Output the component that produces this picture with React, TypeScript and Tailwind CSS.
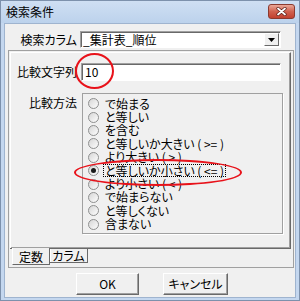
import React from "react";

const items = [
  "で始まる",
  "と等しい",
  "を含む",
  "と等しいか大きい ( >= )",
  "より大きい ( > )",
  "と等しいか小さい ( <= )",
  "より小さい ( < )",
  "で始まらない",
  "と等しくない",
  "含まない",
];

function Radio({ checked }: { checked?: boolean }) {
  return (
    <div className="w-[11px] h-[11px] rounded-full border border-[#8e8f8f] bg-gradient-to-br from-[#d6d6d6] to-[#fdfdfd] flex items-center justify-center shrink-0">
      {checked && <div className="w-[5px] h-[5px] rounded-full bg-[#1a1a1a]" />}
    </div>
  );
}

export default function App() {
  return (
    <div className="relative w-[300px] h-[301px] overflow-hidden bg-[#c4d7ef] border border-[#7d91ac] flex flex-col text-[12px] leading-none text-black [font-family:'Noto_Sans_CJK_JP',sans-serif] [font-feature-settings:'palt']">
      {/* title bar */}
      <div className="h-[22px] flex items-center justify-between pl-[5px] pr-[4px] bg-gradient-to-b from-[#cfdff3] to-[#bcd2ec]">
        <span className="text-[12px] text-black">検索条件</span>
        <div className="w-[27px] h-[15px] mt-[-2px] rounded-[3px] border border-[#8b3a2f] bg-gradient-to-b from-[#e9a899] via-[#d0614f] to-[#c2402f] flex items-center justify-center">
          <svg width="11" height="9" viewBox="0 0 11 9">
            <path d="M2 1.5 L9 7.5 M9 1.5 L2 7.5" stroke="#5a1d16" strokeWidth="3.2" strokeLinecap="round" />
            <path d="M2 1.5 L9 7.5 M9 1.5 L2 7.5" stroke="#ffffff" strokeWidth="1.8" strokeLinecap="round" />
          </svg>
        </div>
      </div>

      {/* client area */}
      <div className="flex-1 mx-[3px] mb-[2px] bg-[#f0f0f0] border border-[#9fb4cf] flex flex-col">
        {/* combobox row */}
        <div className="flex items-center mt-[7px] h-[17px]">
          <div className="w-[72px] text-right">検索カラム</div>
          <div className="ml-[3px] w-[201px] h-[17px] bg-white border-t border-l border-[#a0a0a0] border-r border-b border-r-white border-b-white shadow-[inset_1px_1px_0_#696969] flex items-center">
            <span className="ml-[2px] flex-1">_集計表_順位</span>
            <div className="w-[15px] h-[13px] mr-[1px] bg-[#f0f0f0] border-t border-l border-white border-r border-b border-r-[#696969] border-b-[#696969] flex items-center justify-center">
              <svg width="7" height="4" viewBox="0 0 7 4">
                <path d="M0 0 H7 L3.5 4 Z" fill="#000" />
              </svg>
            </div>
          </div>
        </div>

        {/* outer frame */}
        <div className="mt-[2px] ml-[3px] w-[286px] h-[218px] border border-[#a0a0a0] flex flex-col">
          {/* tab page */}
          <div className="ml-[1px] mt-[1px] w-[281px] h-[196px] border-t border-l border-white border-r border-r-[#696969] shadow-[inset_-1px_-1px_0_#a0a0a0] flex flex-col">
            <div className="flex items-center mt-[10px] h-[18px]">
              <div className="w-[66px] text-right">比較文字列</div>
              <div className="ml-[4px] w-[200px] h-[18px] bg-white border-t border-l border-[#a0a0a0] border-r border-b border-r-white border-b-white shadow-[inset_1px_1px_0_#696969] flex items-center">
                <span className="ml-[3px]">10</span>
              </div>
            </div>
            <div className="flex mt-[12px]">
              <div className="w-[66px] text-right pt-[4px]">比較方法</div>
              <div className="ml-[5px] w-[201px] h-[141px] border border-[#a0a0a0] shadow-[1px_1px_0_#ffffff] flex flex-col pt-[3px] pl-[5px]">
                {items.map((t, i) => (
                  <div key={i} className="h-[13.4px] flex items-center">
                    <Radio checked={i === 5} />
                    <span
                      className={
                        i === 5
                          ? "ml-[4px] px-[1px] h-[13px] leading-[11px] border border-dotted border-black whitespace-pre"
                          : "ml-[6px] whitespace-pre"
                      }
                    >
                      {t}
                    </span>
                  </div>
                ))}
              </div>
            </div>
          </div>
          {/* tabs */}
          <div className="ml-[1px] w-[281px] flex items-start">
            <div className="w-[2px] h-[1px] bg-[#696969]" />
            <div className="w-[38px] h-[17px] border-l border-white border-r border-b border-r-[#696969] border-b-[#696969] flex items-center justify-center pt-[2px]">
              定数
            </div>
            <div className="w-[38px] h-[15px] border-t border-t-[#696969] border-r border-b border-r-[#696969] border-b-[#696969] shadow-[inset_1px_0_0_#ffffff] flex items-center justify-center">
              カラム
            </div>
            <div className="flex-1 h-[1px] bg-[#696969]" />
          </div>
        </div>

        {/* buttons */}
        <div className="flex mt-[5px] ml-[71px] gap-[24px]">
          <div className="w-[63px] h-[22px] bg-[#f0f0f0] border-t border-l border-white border-r border-b border-r-[#696969] border-b-[#696969] shadow-[inset_-1px_-1px_0_#a0a0a0] flex items-center justify-center">
            OK
          </div>
          <div className="w-[65px] h-[22px] bg-[#f0f0f0] border-t border-l border-white border-r border-b border-r-[#696969] border-b-[#696969] shadow-[inset_-1px_-1px_0_#a0a0a0] flex items-center justify-center">
            キャンセル
          </div>
        </div>
      </div>

      {/* red annotation ellipses */}
      <div className="absolute left-[74px] top-[52px] w-[39px] h-[36px] rounded-[50%] border-2 border-[#e8121a]" />
      <div className="absolute left-[73px] top-[158px] w-[168px] h-[27px] rounded-[50%] border-2 border-[#e8121a]" />
    </div>
  );
}
